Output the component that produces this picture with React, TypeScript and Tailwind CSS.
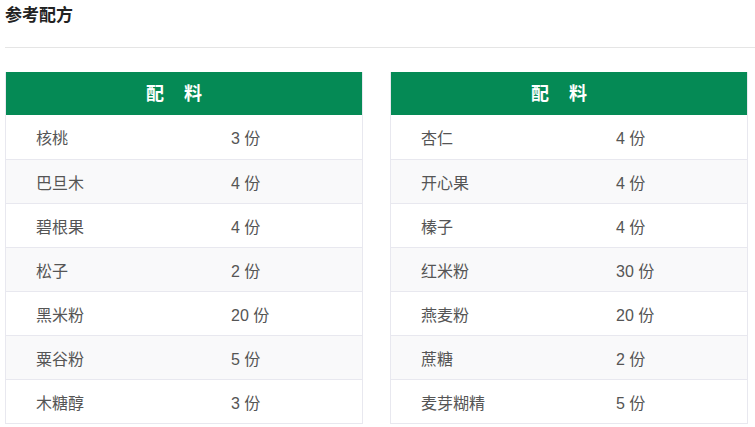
const left = [
  { name: "核桃", amount: "3 份" },
  { name: "巴旦木", amount: "4 份" },
  { name: "碧根果", amount: "4 份" },
  { name: "松子", amount: "2 份" },
  { name: "黑米粉", amount: "20 份" },
  { name: "粟谷粉", amount: "5 份" },
  { name: "木糖醇", amount: "3 份" },
];

const right = [
  { name: "杏仁", amount: "4 份" },
  { name: "开心果", amount: "4 份" },
  { name: "榛子", amount: "4 份" },
  { name: "红米粉", amount: "30 份" },
  { name: "燕麦粉", amount: "20 份" },
  { name: "蔗糖", amount: "2 份" },
  { name: "麦芽糊精", amount: "5 份" },
];

const Table = ({ rows }: { rows: { name: string; amount: string }[] }) => {
  return (
    <div className="w-[358px] border-x border-b border-[#e8e8ef]">
      <div className="h-[43px] bg-[#058a55] flex items-center justify-center text-white font-bold text-[18px] tracking-[20px] pt-[2px]">
        配料
      </div>
      {rows.map((item, i) => (
        <div
          key={i}
          className={`h-[44px] grid grid-cols-[195px_1fr] items-center px-[30px] pt-[4px] text-[16px] text-[#555] ${
            i > 0 ? "border-t border-[#e8e8ef]" : ""
          } ${i % 2 === 1 ? "bg-[#f9f9fa]" : "bg-white"}`}
        >
          <span>{item.name}</span>
          <span>{item.amount}</span>
        </div>
      ))}
    </div>
  );
};

const App = () => {
  return (
    <div
      className="w-[755px] h-[427px] bg-white overflow-hidden pl-[5px]"
      style={{ fontFamily: '"Liberation Sans", "Noto Sans CJK SC", sans-serif' }}
    >
      <h2 className="font-bold text-[17px] text-[#222] pt-[4px] leading-[24px]">参考配方</h2>
      <div className="border-t border-[#e5e5e5] mt-[19px] w-[760px]" />
      <div className="flex gap-[27px] mt-[24px]">
        <Table rows={left} />
        <Table rows={right} />
      </div>
    </div>
  );
};

export default App;
